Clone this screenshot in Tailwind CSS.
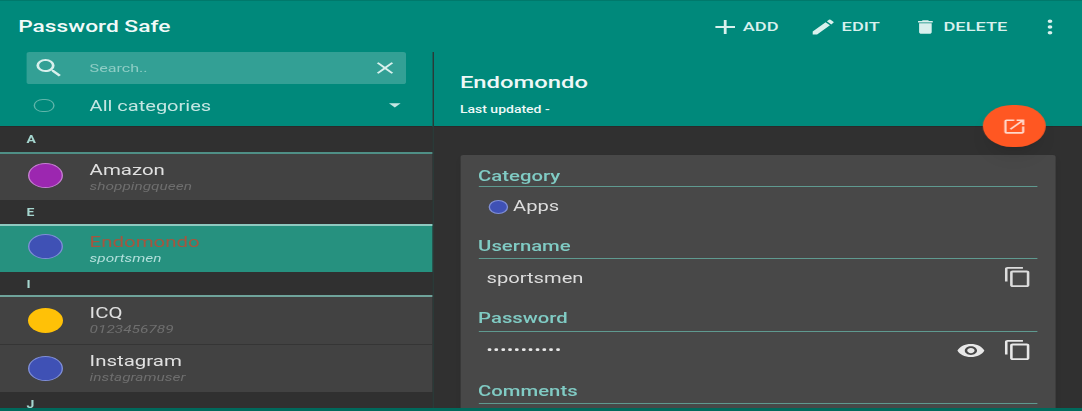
<!DOCTYPE html>
<html lang="en">
  <head>
    <meta charset="UTF-8" />
    <title>Password Safe</title>
    <script src="https://cdn.jsdelivr.net/npm/@tailwindcss/browser@4"></script>
  </head>
  <body class="w-[1082px] h-[411px] overflow-hidden bg-[#303030]">
    <!-- the reference is stretched sideways, so the whole app is drawn narrow and scaled -->
    <div class="relative w-[773px] h-[411px] origin-left scale-x-[1.4] blur-[0.5px] flex flex-col font-['Roboto',sans-serif] border-b-[3px] border-b-[#00695c]">
      <!-- Toolbar -->
      <div class="h-[52px] shrink-0 bg-[#00897b] border-t border-t-[#00796b] flex items-center pl-[13px] pr-[11px] pt-[1px] text-[#d9f0ed]">
        <h1 class="text-[16.25px] font-medium text-[#f1faf9] flex-1">Password Safe</h1>
        <div class="flex items-center text-[13px] font-medium">
          <svg class="w-6 h-6" viewBox="0 0 24 24" fill="currentColor"><path d="M19 13h-6v6h-2v-6H5v-2h6V5h2v6h6v2z"/></svg>
          <span class="ml-[1px] mr-[22px]">ADD</span>
          <svg class="w-5 h-5" viewBox="0 0 24 24" fill="currentColor"><path d="M3 17.25V21h3.75L17.81 9.94l-3.75-3.75L3 17.25zM20.71 7.04a1 1 0 0 0 0-1.41l-2.34-2.34a1 1 0 0 0-1.41 0l-1.83 1.83 3.75 3.75 1.83-1.83z"/></svg>
          <span class="ml-[3px] mr-[23.5px]">EDIT</span>
          <svg class="w-[18px] h-[18px]" viewBox="0 0 24 24" fill="currentColor"><path d="M6 19c0 1.1.9 2 2 2h8c1.1 0 2-.9 2-2V7H6v12zM19 4h-3.5l-1-1h-5l-1 1H5v2h14V4z"/></svg>
          <span class="ml-[4px] mr-[18.5px]">DELETE</span>
          <svg class="w-6 h-6" viewBox="0 0 24 24" fill="currentColor"><path d="M12 8a1.7 1.7 0 1 0 0-3.4A1.7 1.7 0 0 0 12 8zm0 2.3a1.7 1.7 0 1 0 0 3.4 1.7 1.7 0 0 0 0-3.4zm0 5.7a1.7 1.7 0 1 0 0 3.4 1.7 1.7 0 0 0 0-3.4z"/></svg>
        </div>
      </div>

      <div class="flex flex-1 min-h-0">
        <!-- Left column -->
        <div class="w-[310px] shrink-0 border-r border-r-[#2a3a38] flex flex-col">
          <div class="h-[75px] shrink-0 bg-[#00897b] pl-[19px] pr-[19px] border-b border-b-[#2a2a2a]">
            <div class="h-[32px] bg-white/20 rounded-[2px] flex items-center pl-[4px] pr-[5px] text-[#d9f0ed]">
              <svg class="w-6 h-6" viewBox="0 0 24 24" fill="currentColor"><path d="M15.5 14h-.79l-.28-.27A6.47 6.47 0 0 0 16 9.5 6.5 6.5 0 1 0 9.5 16c1.61 0 3.09-.59 4.23-1.57l.27.28v.79l5 4.99L20.49 19l-4.99-5zm-6 0C7.01 14 5 11.99 5 9.5S7.01 5 9.5 5 14 7.01 14 9.5 11.99 14 9.5 14z"/></svg>
              <span class="ml-[17px] pt-[1px] text-[11.5px] text-[#8fcdc5] flex-1">Search..</span>
              <svg class="w-5 h-5" viewBox="0 0 24 24" fill="currentColor"><path d="M19 6.41 17.59 5 12 10.59 6.41 5 5 6.41 10.59 12 5 17.59 6.41 19 12 13.41 17.59 19 19 17.59 13.41 12z"/></svg>
            </div>
            <div class="h-[42px] flex items-center text-[#c4e6e2]">
              <span class="w-[15px] h-[13px] ml-[5px] rounded-full border border-[#5fb5aa]"></span>
              <span class="ml-[25px] pt-[4px] text-[14.3px] flex-1">All categories</span>
              <svg class="w-5 h-5 mr-[-2px]" viewBox="0 0 24 24" fill="currentColor"><path d="m7 10 5 5 5-5z"/></svg>
            </div>
          </div>

          <div class="flex-1 min-h-0 overflow-hidden">
            <div class="h-[25px] pl-[19px] flex items-center text-[10px] font-bold text-[#a5d6cf]">A</div>
            <div class="h-[48px] flex items-center bg-[#424242] border-t-2 border-t-[#4f8f86]">
              <span class="w-[25px] h-[25px] ml-[20px] mb-[4px] rounded-full bg-[#9c27b0] border border-[#c57ed1]"></span>
              <div class="ml-[19px]">
                <div class="text-[14.6px] leading-[18px] text-[#e0e0e0]">Amazon</div>
                <div class="text-[11px] leading-[15px] italic text-[#6e6e6e]">shoppingqueen</div>
              </div>
            </div>
            <div class="h-[24px] pl-[19px] flex items-center text-[10px] font-bold text-[#a5d6cf]">E</div>
            <div class="h-[48px] flex items-center bg-[#26917f] border-t-2 border-t-[#8fc9c0]">
              <span class="w-[25px] h-[25px] ml-[20px] mb-[6px] rounded-full bg-[#3f51b5] border border-[#7f8ed6]"></span>
              <div class="ml-[19px]">
                <div class="text-[14.6px] leading-[18px] text-[#a5563f]">Endomondo</div>
                <div class="text-[11px] leading-[15px] italic text-[#b2dfdb]">sportsmen</div>
              </div>
            </div>
            <div class="h-[23px] pl-[19px] pt-[1px] flex items-center text-[10px] font-bold text-[#a5d6cf]">I</div>
            <div class="h-[50px] flex items-center bg-[#424242] border-t-2 border-t-[#6fa39b] border-b border-b-[#353535]">
              <span class="w-[25px] h-[25px] ml-[20px] rounded-full bg-[#ffc107]"></span>
              <div class="ml-[19px]">
                <div class="text-[14.6px] leading-[18px] text-[#e0e0e0]">ICQ</div>
                <div class="text-[11px] leading-[15px] italic text-[#6e6e6e]">0123456789</div>
              </div>
            </div>
            <div class="h-[47px] flex items-center bg-[#424242]">
              <span class="w-[25px] h-[25px] ml-[20px] rounded-full bg-[#3f51b5] border border-[#7f8ed6]"></span>
              <div class="ml-[19px]">
                <div class="text-[14.6px] leading-[18px] text-[#e0e0e0]">Instagram</div>
                <div class="text-[11px] leading-[15px] italic text-[#6e6e6e]">instagramuser</div>
              </div>
            </div>
            <div class="h-[24px] pl-[19px] flex items-center text-[10px] font-bold text-[#a5d6cf]">J</div>
          </div>
        </div>

        <!-- Right column -->
        <div class="flex-1 min-w-0 flex flex-col">
          <div class="h-[75px] shrink-0 bg-[#00897b] pl-[18.5px] border-b border-b-[#2a2a2a] text-[#eef8f7]">
            <div class="text-[17px] font-medium leading-[22px] pt-[19px]">Endomondo</div>
            <div class="text-[10px] font-medium leading-[14px] mt-[10px]">Last updated -</div>
          </div>
          <div class="flex-1 min-h-0 overflow-hidden pl-[18.5px] pr-[19px] pt-[28px]">
            <div class="h-[300px] bg-[#484848] rounded-[2px] px-[13px] shadow-md">
              <div class="h-[32px] flex items-end text-[14.5px] leading-[18px] font-medium text-[#80cbc4] border-b border-b-[#5f9a90]">Category</div>
              <div class="h-[39px] flex items-center text-[#dcdcdc] text-[14.4px]">
                <span class="w-[14px] h-[14px] ml-[7px] rounded-full bg-[#3f51b5] border border-[#7f8ed6]"></span>
                <span class="ml-[4px]">Apps</span>
              </div>
              <div class="h-[33px] flex items-end text-[14.5px] leading-[18px] font-medium text-[#80cbc4] border-b border-b-[#5f9a90] pb-[2px]">Username</div>
              <div class="h-[39px] flex items-center text-[#dcdcdc] text-[14.4px] pl-[6px]">
                <span class="flex-1">sportsmen</span>
                <svg class="w-[22px] h-[22px] mr-[3px] mb-[4px]" viewBox="0 0 24 24" fill="currentColor"><path d="M16 1H4c-1.1 0-2 .9-2 2v14h2V3h12V1zm3 4H8c-1.1 0-2 .9-2 2v14c0 1.1.9 2 2 2h11c1.1 0 2-.9 2-2V7c0-1.1-.9-2-2-2zm0 16H8V7h11v14z"/></svg>
              </div>
              <div class="h-[34px] flex items-end text-[14.5px] leading-[18px] font-medium text-[#80cbc4] border-b border-b-[#5f9a90] pb-[3px]">Password</div>
              <div class="h-[39px] flex items-center text-[#e8e8e8] text-[13px] pl-[6px]">
                <span class="flex-1 tracking-[0.5px] pb-[3px]">•••••••••••</span>
                <svg class="w-[21px] h-[21px] mr-[12px] mb-[2px]" viewBox="0 0 24 24" fill="currentColor"><path d="M12 4.5C7 4.5 2.73 7.61 1 12c1.73 4.39 6 7.5 11 7.5s9.27-3.11 11-7.5c-1.73-4.39-6-7.5-11-7.5zM12 17c-2.76 0-5-2.24-5-5s2.24-5 5-5 5 2.24 5 5-2.24 5-5 5zm0-8c-1.66 0-3 1.34-3 3s1.34 3 3 3 3-1.34 3-3-1.34-3-3-3z"/></svg>
                <svg class="w-[22px] h-[22px] mr-[3px] mb-[4px]" viewBox="0 0 24 24" fill="currentColor"><path d="M16 1H4c-1.1 0-2 .9-2 2v14h2V3h12V1zm3 4H8c-1.1 0-2 .9-2 2v14c0 1.1.9 2 2 2h11c1.1 0 2-.9 2-2V7c0-1.1-.9-2-2-2zm0 16H8V7h11v14z"/></svg>
              </div>
              <div class="h-[33px] flex items-end text-[14.5px] leading-[18px] font-medium text-[#80cbc4] border-b border-b-[#5f9a90] pb-[2px]">Comments</div>
            </div>
          </div>
        </div>
      </div>

      <!-- Floating button over the header edge -->
      <div class="absolute left-[702px] top-[105px] w-[45px] h-[42px] rounded-full bg-[#ff5722] shadow-lg flex items-center justify-center text-[#ffd9cc]">
        <svg class="w-[19px] h-[19px]" viewBox="0 0 24 24" fill="currentColor"><path d="M19 19H5V5h7V3H5a2 2 0 0 0-2 2v14a2 2 0 0 0 2 2h14c1.1 0 2-.9 2-2v-7h-2v7zM14 3v2h3.59l-9.83 9.83 1.41 1.41L19 6.41V10h2V3h-7z"/></svg>
      </div>
    </div>
  </body>
</html>
